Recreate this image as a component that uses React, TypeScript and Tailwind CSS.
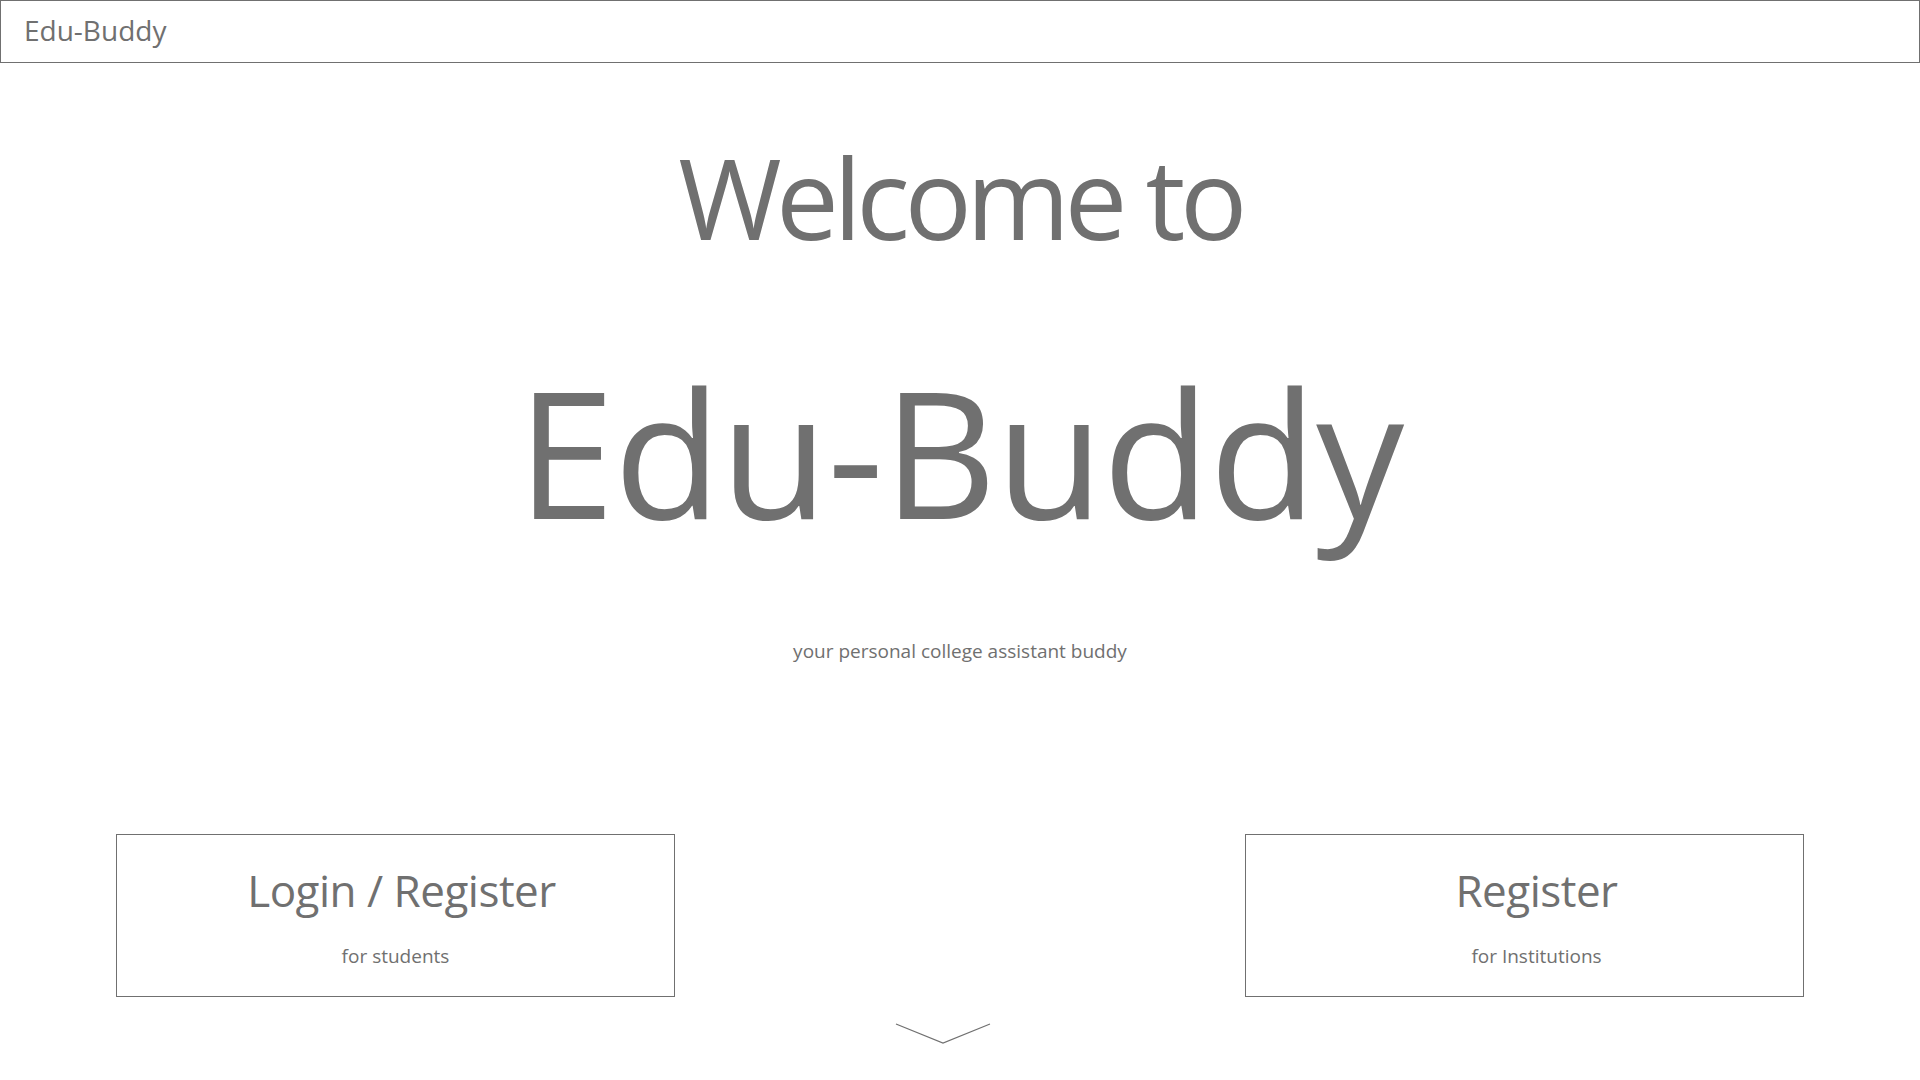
import React from 'react';

const font = { fontFamily: '"Open Sans", "Noto Sans", sans-serif' };

function ActionCard({ title, subtitle, shift }: { title: string; subtitle: string; shift?: boolean }) {
    return (
        <button className="w-[559px] h-[163px] border border-[#707070] bg-white flex flex-col items-center text-[#707070]">
            <span className={shift ? 'mt-[33px] ml-[24px] text-[44px] leading-none tracking-[-0.5px]' : 'mt-[33px] ml-[12px] text-[44px] leading-none tracking-[-0.5px]'}>
                {title}
            </span>
            <span className={shift ? 'mt-[35px] ml-[24px] text-[19px] leading-none' : 'mt-[35px] text-[19px] leading-none'}>
                {subtitle}
            </span>
        </button>
    );
}

export default function App() {
    return (
        <div className="min-h-screen bg-white text-[#707070]" style={font}>
            {/* Top bar */}
            <header className="h-[63px] border border-[#707070] flex items-center px-[23px] pb-[3px]">
                <span className="text-[28px] leading-none">Edu-Buddy</span>
            </header>

            <main className="flex flex-col items-center">
                <h2 className="mt-[78px] text-[112px] leading-none tracking-[-5.5px]">Welcome to</h2>
                <h1 className="mt-[110px] text-[176px] leading-none tracking-[-1px]">Edu-Buddy</h1>
                <p className="mt-[103px] text-[19px] leading-none">your personal college assistant buddy</p>

                <div className="mt-[173px] w-full px-[116px] flex justify-between">
                    <ActionCard title="Login / Register" subtitle="for students" />
                    <ActionCard title="Register" subtitle="for Institutions" shift />
                </div>

                {/* scroll hint */}
                <svg className="mt-[26px] mr-[34px]" width="96" height="21" viewBox="0 0 96 21" fill="none">
                    <path d="M1 1 L48 20 L95 1" stroke="#707070" strokeWidth="1.2" />
                </svg>
            </main>
        </div>
    );
}
